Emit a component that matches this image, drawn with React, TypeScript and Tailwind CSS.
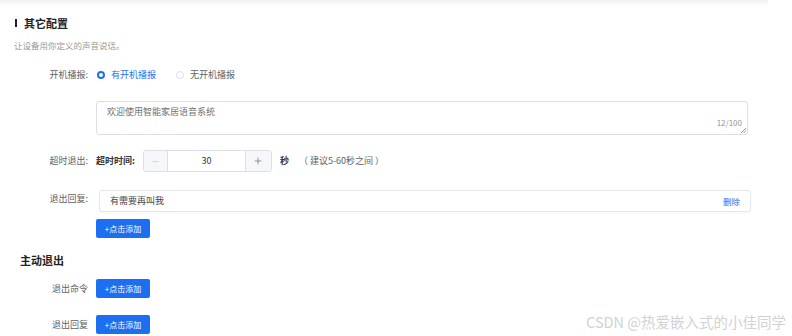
import { Minus, Plus } from "lucide-react";

const font = "font-['Noto_Sans_CJK_SC','Noto_Sans',sans-serif]";

function AddButton() {
  return (
    <button
      type="button"
      className="h-[19px] w-[54px] rounded-[2px] bg-[#1d6ff2] text-white text-[8px] flex items-center justify-center"
    >
      +点击添加
    </button>
  );
}

function Radio({ checked, label }: { checked: boolean; label: string }) {
  return (
    <label className="flex items-center gap-[6px]">
      <span
        className={`w-[8px] h-[8px] rounded-full ${
          checked ? "border-[2.5px] border-[#1d6ff2] bg-white" : "border border-[#dcdfe6]"
        }`}
      />
      <span className={checked ? "text-[#1d6ff2]" : "text-[#606266]"}>{label}</span>
    </label>
  );
}

export default function App() {
  return (
    <div className={`relative w-[792px] h-[336px] overflow-hidden bg-white ${font}`}>
      <div className="h-[6px] w-[768px] bg-gradient-to-b from-[#f0f0f0] to-white" />

      {/* title */}
      <div className="mt-[11px] h-[12px] pl-[15px] flex items-center">
        <span className="w-[2px] h-[8px] bg-[#222]" />
        <span className="ml-[7px] text-[11px] font-bold text-[#222]">其它配置</span>
      </div>
      <div className="mt-[10px] h-[12px] pl-[14px] flex items-center text-[8.5px] text-[#9a9a9a]">
        让设备用你定义的声音说话。
      </div>

      {/* boot broadcast */}
      <div className="mt-[18px] h-[12px] flex items-center text-[9px]">
        <span className="w-[88px] text-right text-[#606266]">开机播报:</span>
        <div className="ml-[9px] flex items-center gap-[20px]">
          <Radio checked label="有开机播报" />
          <Radio checked={false} label="无开机播报" />
        </div>
      </div>

      {/* textarea */}
      <div className="mt-[20px] ml-[96px] w-[652px] h-[34px] relative border border-[#dcdfe6] rounded-[3px] text-[9px]">
        <div className="pl-[10px] pt-[3px] text-[#707070]">欢迎使用智能家居语音系统</div>
        <span className="absolute right-[5px] bottom-[5px] text-[8px] text-[#909399]">12/100</span>
        <svg className="absolute right-[1px] bottom-[1px]" width="5" height="5" viewBox="0 0 5 5">
          <path d="M0 5L5 0M2.5 5L5 2.5" stroke="#777" strokeWidth="0.8" />
        </svg>
      </div>

      {/* timeout */}
      <div className="mt-[15px] h-[22px] flex items-center text-[9px]">
        <span className="w-[88px] text-right text-[#606266]">超时退出:</span>
        <span className="ml-[8px] font-bold text-[#333]">超时时间:</span>
        <div className="ml-[8px] w-[129px] h-[22px] flex border border-[#dcdfe6] rounded-[3px] overflow-hidden">
          <div className="w-[24px] bg-[#f5f7fa] border-r border-[#dcdfe6] flex items-center justify-center">
            <Minus size={9} color="#b5b8bd" strokeWidth={1.5} />
          </div>
          <div className="flex-1 flex items-center justify-center text-[#333]">30</div>
          <div className="w-[26px] bg-[#f5f7fa] border-l border-[#dcdfe6] flex items-center justify-center">
            <Plus size={10} color="#606266" strokeWidth={1.5} />
          </div>
        </div>
        <span className="ml-[8px] font-bold text-[#333]">秒</span>
        <span className="ml-[10px] text-[#606266]">（ 建议5-60秒之间 ）</span>
      </div>

      {/* exit reply */}
      <div className="mt-[18px] flex text-[9px]">
        <span className="w-[88px] text-right text-[#606266] mt-[2px]">退出回复:</span>
        <div className="ml-[11px] w-[652px] h-[22px] flex items-center justify-between px-[10px] border border-[#e4e7ed] rounded-[3px] shadow-[0_1px_2px_rgba(0,0,0,0.04)]">
          <span className="text-[#444]">有需要再叫我</span>
          <span className="text-[#1d6ff2] text-[8.5px]">删除</span>
        </div>
      </div>
      <div className="mt-[7px] ml-[96px]">
        <AddButton />
      </div>

      {/* active exit */}
      <div className="mt-[16px] h-[12px] pl-[20px] flex items-center text-[11px] font-bold text-[#222]">
        主动退出
      </div>
      <div className="mt-[13px] flex items-center text-[9px]">
        <span className="w-[88px] text-right text-[#606266]">退出命令</span>
        <div className="ml-[8px]">
          <AddButton />
        </div>
      </div>
      <div className="mt-[17px] flex items-center text-[9px]">
        <span className="w-[88px] text-right text-[#606266]">退出回复</span>
        <div className="ml-[8px]">
          <AddButton />
        </div>
      </div>

      {/* watermark */}
      <div className="absolute right-[6px] top-[313px] text-[14.5px] leading-[18px] text-[#d2d2d2] whitespace-nowrap">
        CSDN @热爱嵌入式的小佳同学
      </div>
    </div>
  );
}
